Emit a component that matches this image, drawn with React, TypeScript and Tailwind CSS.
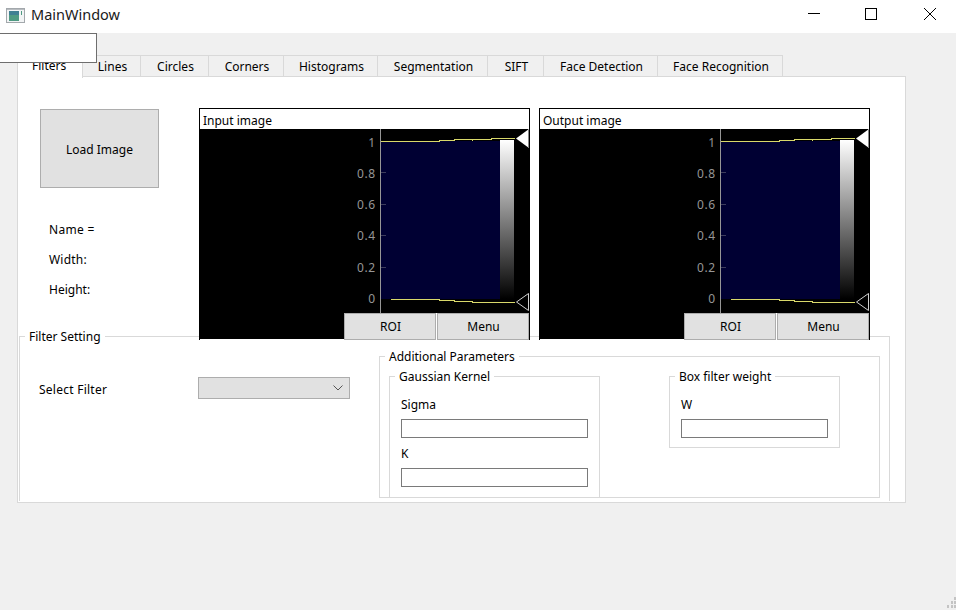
import React from "react";

const font = { fontFamily: '"Noto Sans", "Open Sans", sans-serif' };

const tabs: [string, string][] = [
  ["Lines", "w-[58px]"],
  ["Circles", "w-[68px]"],
  ["Corners", "w-[75px]"],
  ["Histograms", "w-[94px]"],
  ["Segmentation", "w-[110px]"],
  ["SIFT", "w-[56px]"],
  ["Face Detection", "w-[114px]"],
  ["Face Recognition", "w-[125px]"],
];

function Chart() {
  const ticks: [string, number, number][] = [
    ["1", 12, 18],
    ["0.8", 43, 49],
    ["0.6", 75, 80],
    ["0.4", 106, 111],
    ["0.2", 138, 143],
    ["0", 170, 174],
  ];
  return (
    <svg width="329" height="210" viewBox="0 0 329 210" className="block bg-black" shapeRendering="crispEdges">
      <defs>
        <linearGradient id="grad" x1="0" y1="0" x2="0" y2="1">
          <stop offset="0" stopColor="#ffffff" />
          <stop offset="1" stopColor="#000000" />
        </linearGradient>
      </defs>
      <rect x="181" y="12" width="120" height="158" fill="#000033" />
      <rect x="300" y="11" width="14" height="159" fill="url(#grad)" />
      <line x1="180.5" y1="0" x2="180.5" y2="210" stroke="#969696" />
      {ticks.map(([label, y, base]) => (
        <g key={label}>
          {y !== 12 && y !== 170 && <line x1="181" x2="186" y1={y + 0.5} y2={y + 0.5} stroke="#3d3d5c" />}
          <text x="175.5" y={base} textAnchor="end" fontSize="12" fill="#969696" style={{ ...font, letterSpacing: "0.5px" }} shapeRendering="auto">
            {label}
          </text>
        </g>
      ))}
      <polyline fill="none" stroke="#d8d86a" points="181,12.5 239,12.5 239,11.5 254,11.5 254,10.5 272,10.5 272,11.5 272,10.5 291,10.5 291,9.5 315,9.5" />
      <polyline fill="none" stroke="#d8d86a" points="191,170.5 239,170.5 239,171.5 254,171.5 254,172.5 272,172.5 272,173.5 291,173.5 315,173.5" />
      <polygon points="316,9.5 329,0 329,19" fill="#ffffff" shapeRendering="auto" />
      <rect x="328" y="1" width="1" height="18" fill="#8a8a8a" />
      <polygon points="316.5,173 328.5,164.5 328.5,181.5" fill="#000000" stroke="#d0d0d0" shapeRendering="auto" />
    </svg>
  );
}

function ImageView({ title }: { title: string }) {
  return (
    <div className="relative w-[331px] h-[232px] border border-black border-b-0 bg-white">
      <div className="h-[20px] pl-[3px] text-[12px] leading-[23px] text-black">{title}</div>
      <Chart />
      <div className="absolute right-0 bottom-0 flex gap-[1px] bg-white">
        <div className="w-[92px] h-[27px] pl-[1px] bg-[#e1e1e1] border border-[#adadad] flex items-center justify-center text-[12px] text-black">ROI</div>
        <div className="w-[92px] h-[27px] pl-[1px] bg-[#e1e1e1] border border-[#adadad] flex items-center justify-center text-[12px] text-black">Menu</div>
      </div>
    </div>
  );
}

function Legend({ children }: { children: React.ReactNode }) {
  return (
    <span className="absolute left-[5px] top-[-8px] bg-white px-[4px] text-[12px] leading-[16px] text-black whitespace-nowrap">
      {children}
    </span>
  );
}

function Field({ label, className }: { label: string; className: string }) {
  return (
    <div className={className}>
      <div className="text-[12px] leading-[16px] text-black mb-[6px]">{label}</div>
      <div className="h-[19px] border border-[#7a7a7a] bg-white" />
    </div>
  );
}

export default function App() {
  return (
    <div className="relative w-[956px] h-[610px] overflow-hidden bg-[#f0f0f0] text-black" style={font}>
      {/* title bar */}
      <div className="h-[33px] bg-white flex items-center pb-[6px] pr-[3px]">
        <svg width="19" height="15" viewBox="0 0 19 15" className="ml-[6px] mt-[3px]" shapeRendering="crispEdges">
          <rect x="0.5" y="0.5" width="18" height="14" fill="#f2f4f5" stroke="#a3a8ac" />
          <rect x="1" y="1" width="17" height="1" fill="#b8bcc0" />
          <rect x="3" y="3" width="10" height="10" fill="#4f9a82" />
          <rect x="3" y="3" width="10" height="4" fill="#3f7f92" />
          <rect x="15" y="3" width="1" height="4" fill="#4f9a82" />
        </svg>
        <span className="ml-[6px] text-[14.5px] leading-[20px] text-[#1a1a1a]">MainWindow</span>
        <div className="ml-auto flex items-center">
          <div className="w-[46px] flex justify-center mr-[11px]">
            <div className="w-[12px] h-px bg-black" />
          </div>
          <div className="w-[46px] flex justify-center">
            <div className="w-[12px] h-[12px] border border-black" />
          </div>
          <div className="w-[46px] flex justify-center ml-[13px]">
            <svg width="12" height="12" viewBox="0 0 12 12">
              <path d="M0 0L12 12M12 0L0 12" stroke="#000" strokeWidth="1" fill="none" />
            </svg>
          </div>
        </div>
      </div>

      {/* stray overlapping box */}
      <div className="absolute left-[-1px] top-[33px] w-[98px] h-[30px] bg-white border border-[#6e6e6e] z-20" />

      {/* tab widget */}
      <div className="ml-[17px] w-[889px] mt-[21px]">
        <div className="flex items-end h-[23px] relative z-10">
          <div className="w-[66px] h-[24px] mb-[-1px] bg-white border-l border-r border-[#d9d9d9] pl-[14px] text-[12px] leading-[24px] text-black">
            Filters
          </div>
          {tabs.map(([t, w]) => (
            <div
              key={t}
              className={`${w} h-[22px] pt-[2px] pl-[2px] bg-[#f0f0f0] border-t border-r border-b border-[#d9d9d9] flex items-center justify-center text-[12px] text-black`}
            >
              {t}
            </div>
          ))}
        </div>

        <div className="h-[427px] bg-white border border-[#d9d9d9] mt-[-1px]">
          {/* upper row */}
          <div className="flex h-[259px] relative z-10">
            <div className="w-[181px] shrink-0 pl-[22px] pt-[32px]">
              <div className="w-[119px] h-[79px] pt-[3px] bg-[#e1e1e1] border border-[#adadad] flex items-center justify-center text-[12px] text-black">
                Load Image
              </div>
              <div className="pl-[9px] pt-[34px] flex flex-col gap-[14px] text-[12px] leading-[16px] text-black">
                <div className="tracking-[0.3px]">Name =</div>
                <div className="tracking-[0.2px]">Width:</div>
                <div>Height:</div>
              </div>
            </div>
            <div className="flex gap-[9px] pt-[31px]">
              <ImageView title="Input image" />
              <ImageView title="Output image" />
            </div>
          </div>

          {/* Filter Setting */}
          <div className="relative ml-[1px] w-[871px] h-[165px] border-l border-t border-r border-[#d9d9d9]">
            <Legend>Filter Setting</Legend>
            <div className="flex">
              <div className="w-[178px] pl-[19px] pt-[45px] text-[12px] leading-[16px] tracking-[0.25px] text-black shrink-0">Select Filter</div>
              <div className="mt-[40px] w-[152px] h-[22px] bg-[#e1e1e1] border border-[#adadad] flex items-center justify-end pr-[6px] shrink-0">
                <svg width="10" height="6" viewBox="0 0 10 6">
                  <path d="M0.5 0.5L5 5L9.5 0.5" stroke="#555" fill="none" />
                </svg>
              </div>
              {/* Additional Parameters */}
              <div className="relative ml-[29px] mt-[19px] w-[501px] h-[142px] border border-[#d9d9d9] flex">
                <Legend>Additional Parameters</Legend>
                <div className="relative ml-[9px] mt-[19px] w-[211px] h-[121px] border-l border-t border-r border-[#d9d9d9] shrink-0">
                  <Legend>Gaussian Kernel</Legend>
                  <Field label="Sigma" className="ml-[11px] mr-[11px] mt-[20px]" />
                  <Field label="K" className="ml-[11px] mr-[11px] mt-[8px]" />
                </div>
                <div className="relative ml-[69px] mt-[19px] w-[171px] h-[72px] border border-[#d9d9d9] shrink-0">
                  <Legend>Box filter weight</Legend>
                  <Field label="W" className="ml-[11px] mr-[11px] mt-[20px]" />
                </div>
              </div>
            </div>
          </div>
        </div>
      </div>

      {/* resize grip */}
      <svg width="9" height="12" viewBox="0 0 9 12" className="absolute right-0 bottom-[1px]" shapeRendering="crispEdges">
        <g fill="#c4c4c4">
          <rect x="7" y="0" width="2" height="3" />
          <rect x="4" y="4" width="2" height="3" />
          <rect x="7" y="4" width="2" height="3" />
          <rect x="0" y="8" width="2" height="3" />
          <rect x="4" y="8" width="2" height="3" />
          <rect x="7" y="8" width="2" height="3" />
        </g>
      </svg>
    </div>
  );
}
